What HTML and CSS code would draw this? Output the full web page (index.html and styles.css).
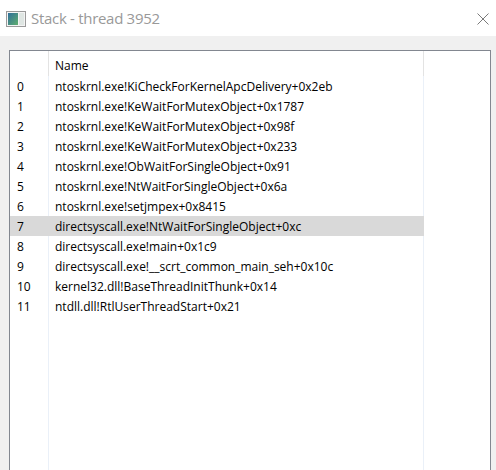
FILE: index.html
```html
<!DOCTYPE html>
<html>
<head>
<meta charset="utf-8">
<link rel="stylesheet" href="styles.css">
</head>
<body>
<div class="window">
  <div class="titlebar">
    <svg class="app-icon" width="20" height="16" viewBox="0 0 20 16">
      <defs>
        <linearGradient id="g" x1="0" y1="0" x2="1" y2="1">
          <stop offset="0" stop-color="#2f6f9a"/>
          <stop offset="1" stop-color="#5fae6e"/>
        </linearGradient>
      </defs>
      <rect x="0.5" y="0.5" width="19" height="15" fill="#f4f4f4" stroke="#9a9a9a"/>
      <rect x="2" y="2" width="10" height="12" fill="url(#g)"/>
      <rect x="13" y="2" width="5" height="12" fill="#dfe6e3"/>
    </svg>
    <div class="title">Stack - thread 3952</div>
    <svg class="close" width="12" height="12" viewBox="0 0 12 12">
      <path d="M0.5 0.5 L11.5 11.5 M11.5 0.5 L0.5 11.5" stroke="#7a7a7a" stroke-width="1"/>
    </svg>
  </div>
  <div class="content">
    <div class="list">
      <div class="row header">
        <div class="cell num"></div>
        <div class="cell name">Name</div>
        <div class="cell fill"></div>
      </div>
      <div class="row"><div class="cell num">0</div><div class="cell name">ntoskrnl.exe!KiCheckForKernelApcDelivery+0x2eb</div><div class="cell fill"></div></div>
      <div class="row"><div class="cell num">1</div><div class="cell name">ntoskrnl.exe!KeWaitForMutexObject+0x1787</div><div class="cell fill"></div></div>
      <div class="row"><div class="cell num">2</div><div class="cell name">ntoskrnl.exe!KeWaitForMutexObject+0x98f</div><div class="cell fill"></div></div>
      <div class="row"><div class="cell num">3</div><div class="cell name">ntoskrnl.exe!KeWaitForMutexObject+0x233</div><div class="cell fill"></div></div>
      <div class="row"><div class="cell num">4</div><div class="cell name">ntoskrnl.exe!ObWaitForSingleObject+0x91</div><div class="cell fill"></div></div>
      <div class="row"><div class="cell num">5</div><div class="cell name">ntoskrnl.exe!NtWaitForSingleObject+0x6a</div><div class="cell fill"></div></div>
      <div class="row"><div class="cell num">6</div><div class="cell name">ntoskrnl.exe!setjmpex+0x8415</div><div class="cell fill"></div></div>
      <div class="row selected"><div class="cell num">7</div><div class="cell name">directsyscall.exe!NtWaitForSingleObject+0xc</div><div class="cell fill"></div></div>
      <div class="row"><div class="cell num">8</div><div class="cell name">directsyscall.exe!main+0x1c9</div><div class="cell fill"></div></div>
      <div class="row"><div class="cell num">9</div><div class="cell name">directsyscall.exe!__scrt_common_main_seh+0x10c</div><div class="cell fill"></div></div>
      <div class="row"><div class="cell num">10</div><div class="cell name">kernel32.dll!BaseThreadInitThunk+0x14</div><div class="cell fill"></div></div>
      <div class="row"><div class="cell num">11</div><div class="cell name">ntdll.dll!RtlUserThreadStart+0x21</div><div class="cell fill"></div></div>
      <div class="row filler"><div class="cell num"></div><div class="cell name"></div><div class="cell fill"></div></div>
    </div>
  </div>
</div>
</body>
</html>
```

FILE: styles.css
```css
html, body {
  margin: 0;
  padding: 0;
  height: 470px;
  overflow: hidden;
}
body {
  background: #f0f0f0;
  font-family: "Open Sans", "Noto Sans", sans-serif;
}
.window {
  display: flex;
  flex-direction: column;
  height: 470px;
}
.titlebar {
  height: 36px;
  background: #ffffff;
  display: flex;
  align-items: center;
  flex: none;
}
.app-icon {
  margin-left: 6px;
  margin-top: 1px;
}
.title {
  margin-left: 5px;
  font-size: 15px;
  letter-spacing: -0.3px;
  color: #999999;
  flex: 1;
}
.close {
  margin-right: 7px;
  margin-top: 1px;
}
.content {
  flex: 1;
  display: flex;
  padding: 14px 5px 0 9px;
  min-height: 0;
}
.list {
  flex: 1;
  background: #ffffff;
  border: 1px solid #828790;
  border-bottom: none;
  display: flex;
  flex-direction: column;
  font-size: 12px;
  color: #000;
}
.row {
  display: flex;
  height: 20px;
  flex: none;
}
.row.header {
  height: 25px;
}
.row.filler {
  flex: 1;
  height: auto;
}
.cell {
  display: flex;
  align-items: center;
  white-space: nowrap;
  box-sizing: border-box;
}
.num {
  width: 39px;
  padding-left: 7px;
  border-right: 1px solid #eaf0f8;
}
.name {
  width: 375px;
  padding-left: 6px;
  border-right: 1px solid #eaf0f8;
}
.fill {
  flex: 1;
}
.header .num,
.header .name {
  border-right-color: #e3e3e3;
}
.header .cell {
  padding-top: 3px;
}
.selected .num,
.selected .name {
  background: #d9d9d9;
  border-right-color: #d9d9d9;
}
```
